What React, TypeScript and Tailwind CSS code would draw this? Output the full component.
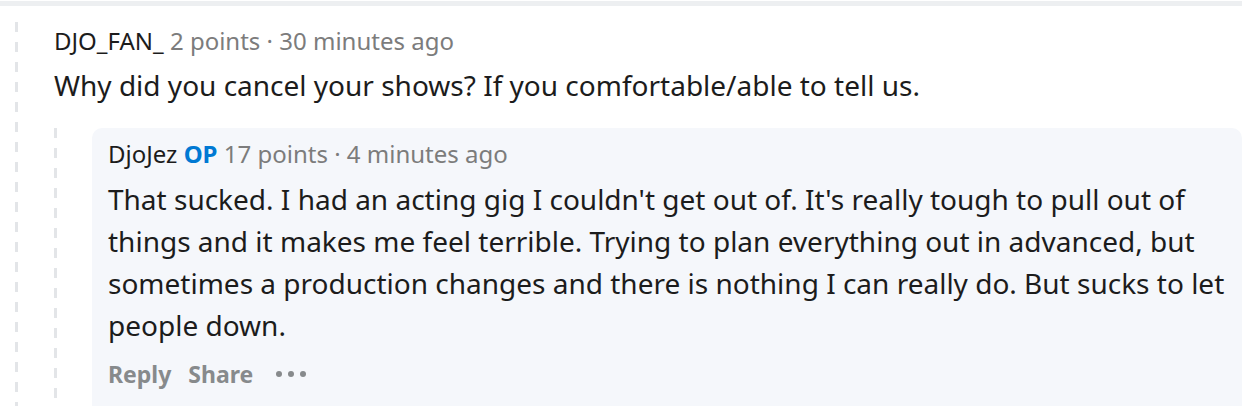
import React from "react";

const font = { fontFamily: '"Noto Sans", "Open Sans", sans-serif' };

function Dashes({ className }: { className: string }) {
  return (
    <div
      className={
        "w-[3px] bg-[repeating-linear-gradient(to_bottom,#e3e5e8_0px,#e3e5e8_10px,transparent_10px,transparent_20px)] " +
        className
      }
    />
  );
}

export default function App() {
  return (
    <div className="w-[1254px] h-[406px] bg-white overflow-hidden" style={font}>
      <div className="h-[5px] mt-[1px] w-[1242px] bg-[#edeff1]" />
      <div className="flex">
        <div className="w-[54px] shrink-0 flex pl-[15px] pt-[16px]">
          <Dashes className="h-[400px]" />
        </div>
        <div className="flex-1 pt-[22px]">
          <div className="text-[24px] leading-[26px] text-[#7c7c7c]">
            <span className="text-[#1c1c1c]">DJO_FAN_</span> 2 points · 30 minutes ago
          </div>
          <div className="mt-[10px] text-[28px] leading-[42px] text-[#1c1c1c]">
            Why did you cancel your shows? If you comfortable/able to tell us.
          </div>
          <div className="flex mt-[22px]">
            <div className="w-[38px] shrink-0 flex">
              <Dashes className="h-[300px]" />
            </div>
            <div className="w-[1150px] bg-[#f5f7fb] rounded-[10px] pl-[16px] pr-[12px] pt-[13px] pb-[14px]">
              <div className="text-[24px] leading-[26px] text-[#7c7c7c]">
                <span className="text-[#1c1c1c]">DjoJez</span>{" "}
                <span className="text-[#0079d3] font-bold">OP</span> 17 points · 4 minutes ago
              </div>
              <div className="mt-[11px] text-[28px] leading-[42px] text-[#1c1c1c]">
                That sucked. I had an acting gig I couldn't get out of. It's really tough to pull out of things and it makes me feel terrible. Trying to plan everything out in advanced, but sometimes a production changes and there is nothing I can really do. But sucks to let people down.
              </div>
              <div className="mt-[15px] flex items-center text-[23px] leading-[26px] font-bold text-[#878a8c]">
                <span>Reply</span>
                <span className="ml-[17px]">Share</span>
                <span className="ml-[23px] flex gap-[6px] items-center">
                  <span className="w-[6px] h-[6px] rounded-full bg-[#878a8c]" />
                  <span className="w-[6px] h-[6px] rounded-full bg-[#878a8c]" />
                  <span className="w-[6px] h-[6px] rounded-full bg-[#878a8c]" />
                </span>
              </div>
            </div>
          </div>
        </div>
      </div>
    </div>
  );
}
